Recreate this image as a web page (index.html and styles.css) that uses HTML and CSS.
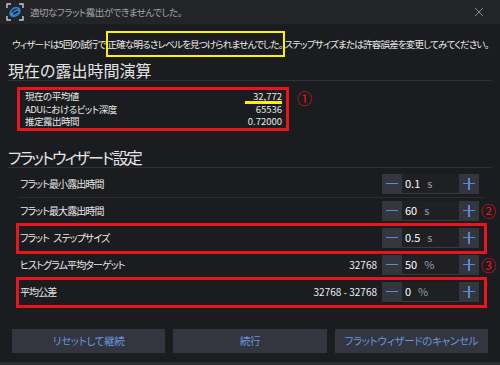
FILE: index.html
```html
<!DOCTYPE html>
<html lang="ja">
<head>
    <meta charset="UTF-8">
    <meta name="viewport" content="width=device-width, initial-scale=1.0">
    <title>フラットウィザード</title>
    <link rel="stylesheet" href="styles.css">
</head>
<body>
    <div class="window">
        <div class="titlebar">
            <svg class="app-icon" width="18" height="18" viewBox="0 0 18 18">
                <path d="M1 5V1h4M13 1h4v4M17 13v4h-4M5 17H1v-4" fill="none" stroke="#c8ccd4" stroke-width="1.4"/>
                <ellipse cx="9" cy="9" rx="6.2" ry="4.6" transform="rotate(-35 9 9)" fill="#2f7fd0"/>
                <ellipse cx="9.4" cy="8.6" rx="3.6" ry="2.4" transform="rotate(-35 9 9)" fill="#0d2440"/>
                <path d="M5.5 11.5c1.5-2.6 4.2-4.4 7-4.6" fill="none" stroke="#7fc0ff" stroke-width="1"/>
            </svg>
            <span class="title">適切なフラット露出ができませんでした。</span>
            <svg class="close" width="10" height="10" viewBox="0 0 10 10">
                <path d="M1 1l8 8M9 1l-8 8" stroke="#8c8c90" stroke-width="1"/>
            </svg>
        </div>

        <div class="content">
            <p class="message">ウィザードは5回の試行で<span class="hl">正確な明るさレベルを見つけられませんでした。</span>ステップサイズまたは許容誤差を変更してみてください。</p>

            <h2 class="section-title">現在の露出時間演算</h2>
            <div class="calc">
                <div class="calc-box">
                    <div class="calc-row"><span>現在の平均値</span><span class="num mean">32,772</span></div>
                    <div class="calc-row"><span>ADUにおけるビット深度</span><span class="num">65536</span></div>
                    <div class="calc-row"><span>推定露出時間</span><span class="num">0.72000</span></div>
                </div>
                <span class="mark">①</span>
            </div>

            <h2 class="section-title narrow">フラットウィザード設定</h2>
            <div class="settings">
                <div class="row">
                    <span class="label">フラット最小露出時間</span>
                    <div class="spin">
                        <span class="spin-btn minus"></span>
                        <span class="spin-val">0.1<span class="unit">s</span></span>
                        <span class="spin-btn plus"></span>
                    </div>
                </div>
                <div class="row">
                    <span class="label">フラット最大露出時間</span>
                    <div class="spin">
                        <span class="spin-btn minus"></span>
                        <span class="spin-val">60<span class="unit">s</span></span>
                        <span class="spin-btn plus"></span>
                    </div>
                    <span class="mark side">②</span>
                </div>
                <div class="row boxed">
                    <span class="label">フラット ステップサイズ</span>
                    <div class="spin">
                        <span class="spin-btn minus"></span>
                        <span class="spin-val">0.5<span class="unit">s</span></span>
                        <span class="spin-btn plus"></span>
                    </div>
                </div>
                <div class="row">
                    <span class="label">ヒストグラム平均ターゲット</span>
                    <span class="extra">32768</span>
                    <div class="spin">
                        <span class="spin-btn minus"></span>
                        <span class="spin-val">50<span class="unit">%</span></span>
                        <span class="spin-btn plus"></span>
                    </div>
                    <span class="mark side">③</span>
                </div>
                <div class="row boxed">
                    <span class="label">平均公差</span>
                    <span class="extra">32768 - 32768</span>
                    <div class="spin">
                        <span class="spin-btn minus"></span>
                        <span class="spin-val">0<span class="unit">%</span></span>
                        <span class="spin-btn plus"></span>
                    </div>
                </div>
            </div>

            <div class="actions">
                <button>リセットして継続</button>
                <button>続行</button>
                <button>フラットウィザードのキャンセル</button>
            </div>
        </div>
        <div class="bottom-edge"></div>
    </div>
</body>
</html>
```

FILE: styles.css
```css
body {
    margin: 0;
    padding: 0;
    background: #1b1c1f;
    color: #e8e8e8;
    font-family: "Noto Sans CJK JP", "Noto Sans", sans-serif;
    font-feature-settings: "palt";
}
.window {
    width: 500px;
    height: 365px;
    display: flex;
    flex-direction: column;
    overflow: hidden;
}
.titlebar {
    height: 24px;
    background: #232427;
    display: flex;
    align-items: center;
    padding: 0 6px;
}
.app-icon {
    margin-right: 6px;
}
.title {
    flex: 1;
    font-size: 9.5px;
    letter-spacing: -0.5px;
    color: #a4a4a8;
}
.close {
    margin-right: 10px;
}
.content {
    flex: 1;
    padding: 0 8px;
}
.message {
    margin: 12px 0 0 4px;
    font-size: 9.5px;
    letter-spacing: -0.8px;
    line-height: 16px;
    color: #ececec;
    white-space: nowrap;
}
.hl {
    border: 2px solid #fff200;
    padding: 4px 0;
}
.section-title {
    margin: 8px 0 0;
    font-size: 16px;
    font-weight: normal;
    line-height: 20px;
    color: #e4e4e4;
    border-bottom: 1px solid #303135;
}
.section-title.narrow {
    letter-spacing: -2px;
}
.calc {
    display: flex;
    align-items: flex-start;
    margin: 6px 0 0 9px;
}
.calc-box {
    width: 272px;
    border: 3px solid #e8141e;
    padding: 0 4px 0 5px;
    box-sizing: border-box;
}
.calc-row {
    display: flex;
    justify-content: space-between;
    font-size: 9.5px;
    letter-spacing: -0.5px;
    line-height: 12.5px;
}
.num {
    letter-spacing: 0;
}
.mean {
    position: relative;
    text-decoration: underline;
}
.mean::after {
    content: "";
    position: absolute;
    left: -8px;
    right: 0;
    bottom: -1px;
    height: 3px;
    background: #fff200;
}
.mark {
    color: #e8141e;
    font-size: 15px;
    line-height: 16px;
    margin: 3px 0 0 8px;
}
.calc + .section-title {
    margin-top: 16px;
}
.settings {
    margin: 3px 7px 0 10px;
}
.row {
    position: relative;
    height: 27px;
    display: flex;
    align-items: center;
    padding: 0 6px 0 2px;
    border-bottom: 1px solid #2c2d31;
    box-sizing: border-box;
    font-size: 10px;
    letter-spacing: -0.9px;
    word-spacing: 3px;
}
.row.boxed {
    outline: 3px solid #e8141e;
    outline-offset: -1px;
}
.label {
    flex: 1;
}
.extra {
    margin-right: 5px;
    color: #f0f0f0;
    letter-spacing: 0;
    word-spacing: 0;
}
.spin {
    display: flex;
    height: 20px;
}
.spin-btn {
    width: 20px;
    background: #34363d;
    position: relative;
}
.spin-btn::before, .plus::after {
    content: "";
    position: absolute;
    left: 4px;
    top: 9px;
    width: 12px;
    height: 1.5px;
    background: #5b88d6;
}
.plus::after {
    left: 9.25px;
    top: 4px;
    width: 1.5px;
    height: 12px;
}
.spin-val {
    width: 57px;
    box-sizing: border-box;
    padding-left: 3px;
    line-height: 19px;
    background: #1f2023;
    border-bottom: 1px solid #3a3b40;
    color: #ffffff;
    font-size: 11px;
    letter-spacing: 0;
}
.unit {
    margin-left: 7px;
    color: #9a9aa0;
}
.mark.side {
    position: absolute;
    left: calc(100% - 4px);
    top: 5px;
    margin: 0;
    letter-spacing: 0;
}
.actions {
    display: flex;
    gap: 8px;
    margin: 23px 4px 0;
}
.actions button {
    flex: 1;
    height: 24px;
    border: none;
    background: #33363e;
    color: #6c94dc;
    font-family: inherit;
    font-size: 10.5px;
    letter-spacing: -0.3px;
    font-feature-settings: "palt";
    padding: 0;
}
.bottom-edge {
    height: 3px;
    background: #2c2d30;
}
```
